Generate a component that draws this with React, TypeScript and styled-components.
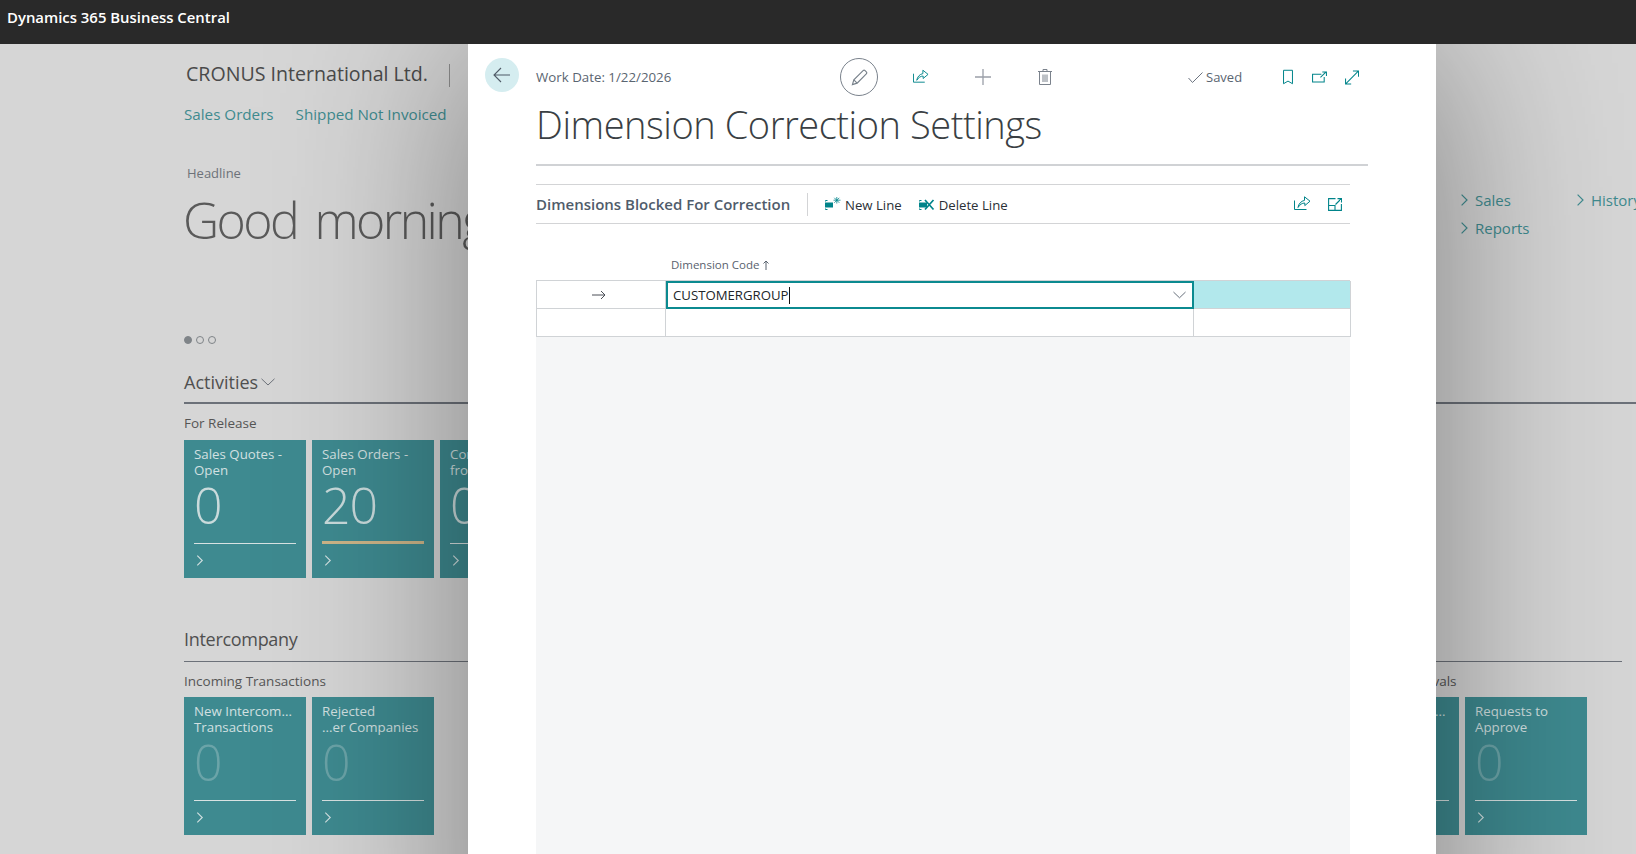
import React from 'react'
import styled, { createGlobalStyle } from 'styled-components'

const FONT = '"Open Sans", "Noto Sans", "Liberation Sans", sans-serif'
const TEAL = '#00848a'

const GlobalStyle = createGlobalStyle`
	html, body {
		margin: 0;
		height: 100%;
		overflow: hidden;
		background: #d6d6d6;
		font-family: ${FONT};
	}
`

interface TileData {
	lines: string[]
	value: string
	warn?: boolean
}

const releaseTiles: TileData[] = [
	{ lines: ['Sales Quotes -', 'Open'], value: '0' },
	{ lines: ['Sales Orders -', 'Open'], value: '20', warn: true },
	{ lines: ['Contracts -', 'from Sales'], value: '0' },
]

const incomingTiles: TileData[] = [
	{ lines: ['New Intercom...', 'Transactions'], value: '0' },
	{ lines: ['Rejected', '...er Companies'], value: '0' },
]

const approvalTiles: TileData[] = [
	{ lines: ['Requests Sent...', 'for Approval'], value: '0' },
	{ lines: ['Requests to', 'Approve'], value: '0' },
]

function Chevron({ size = 10 }: { size?: number }) {
	return (
		<svg width={size} height={size} viewBox="0 0 10 10" fill="none" stroke="currentColor" strokeWidth="1">
			<path d="M3 .5 7.5 5 3 9.5" />
		</svg>
	)
}

function ChevronDown({ width = 14 }: { width?: number }) {
	return (
		<svg width={width} height={8} viewBox="0 0 14 8" fill="none" stroke="currentColor" strokeWidth="1">
			<path d="M.5 .8 7 7l6.5-6.2" />
		</svg>
	)
}

function Tile({ tile, dim }: { tile: TileData; dim?: boolean }) {
	return (
		<TileBox>
			<TileTitle>
				{tile.lines.map((line) => (
					<div key={line}>{line}</div>
				))}
			</TileTitle>
			<TileValue $dim={dim}>{tile.value}</TileValue>
			<TileBar $warn={tile.warn} />
			<TileArrow>
				<Chevron size={11} />
			</TileArrow>
		</TileBox>
	)
}

function ShareIcon() {
	return (
		<svg width="17" height="16" viewBox="0 0 17 16" fill="none" stroke={TEAL} strokeWidth="1">
			<path d="M.5 4.500v9h12" />
			<path d="M4 11.500C4.500 8 7 5 10.500 4.400V.8L16 5.200 10.800 9.600V7C8 7 6 8.500 4 11.500z" />
		</svg>
	)
}

function SplitIcon() {
	return (
		<svg width="14" height="13" viewBox="0 0 14 13" fill="none" stroke={TEAL} strokeWidth="1.1">
			<path d="M7.500 .6H.6v11.800h12.800V6M.6 7.500H7v5M7.500 6.500 13 1M9.500 .6h4V4.500" />
		</svg>
	)
}

function NewLineIcon() {
	return (
		<svg width="16" height="15" viewBox="0 0 16 15" fill="none">
			<rect x="0" y="5.500" width="8" height="5" fill={TEAL} />
			<path d="M.5 4.500V3.500h2M.5 11.500v1h2" stroke={TEAL} strokeWidth="1" />
			<path d="M11.800 0v6.500M8.500 3.200h7M9.300 .8l5 5M14.300 .8l-5 5" stroke={TEAL} strokeWidth=".8" />
		</svg>
	)
}

function DeleteLineIcon() {
	return (
		<svg width="16" height="15" viewBox="0 0 16 15" fill="none">
			<rect x="0" y="5.500" width="8" height="5" fill={TEAL} />
			<path d="M.5 4.500V3.500h2M.5 11.500v1h2" stroke={TEAL} strokeWidth="1" />
			<path d="M6 3 14.500 12.500M14.500 3 6 12.500" stroke={TEAL} strokeWidth="1.700" />
		</svg>
	)
}

export default function App() {
	return (
		<Shell>
			<GlobalStyle />
			<TopBar>Dynamics 365 Business Central</TopBar>

			<Page>
				{/* Role center behind the dialog */}
				<CompanyRow>
					<CompanyName>CRONUS International Ltd.</CompanyName>
					<CompanySeparator />
				</CompanyRow>
				<NavRow>
					<NavLink>Sales Orders</NavLink>
					<NavLink>Shipped Not Invoiced</NavLink>
				</NavRow>

				<Hero>
					<HeroText>
						<HeadlineLabel>Headline</HeadlineLabel>
						<Greeting>Good morning, Annie!</Greeting>
					</HeroText>
					<ActionLinks>
						<ActionLink>
							<Chevron size={12} />
							Sales
						</ActionLink>
						<ActionLink>
							<Chevron size={12} />
							History
						</ActionLink>
						<ActionLink>
							<Chevron size={12} />
							Reports
						</ActionLink>
					</ActionLinks>
				</Hero>

				<Dots>
					<Dot $active />
					<Dot />
					<Dot />
				</Dots>

				<ActivitiesHeading>
					<SectionTitle>Activities</SectionTitle>
					<ChevronDown />
				</ActivitiesHeading>
				<GroupLabel>For Release</GroupLabel>
				<TileRow $top={7}>
					{releaseTiles.map((tile) => (
						<Tile key={tile.lines[0]} tile={tile} />
					))}
				</TileRow>

				<IntercompanyHeading>
					<SectionTitle>Intercompany</SectionTitle>
				</IntercompanyHeading>
				<SplitRow>
					<div>
						<GroupLabel>Incoming Transactions</GroupLabel>
						<TileRow $top={6}>
							{incomingTiles.map((tile) => (
								<Tile key={tile.lines[0]} tile={tile} dim />
							))}
						</TileRow>
					</div>
					<ApprovalGroup>
						<ApprovalLabel>Pending Approvals</ApprovalLabel>
						<TileRow $top={6}>
							{approvalTiles.map((tile) => (
								<Tile key={tile.lines[0]} tile={tile} dim />
							))}
						</TileRow>
					</ApprovalGroup>
				</SplitRow>
			</Page>

			<Dialog>
				<BackButton>
					<svg width="18" height="16" viewBox="0 0 18 16" fill="none" stroke="#4f5b67" strokeWidth="1.1">
						<path d="M17 8H1M8 1 1 8l7 7" />
					</svg>
				</BackButton>

				<DialogHeader>
					<WorkDate>Work Date: 1/22/2026</WorkDate>
					<CenterActions>
						<PencilCircle>
							<svg width="17" height="17" viewBox="0 0 18 18" fill="none" stroke="#77808a" strokeWidth="1.200">
								<path d="M1.500 16.500 3 11.500 12.800 1.700a1.500 1.500 0 0 1 2.100 0l1.300 1.300a1.500 1.500 0 0 1 0 2.100L6.500 15z" />
								<path d="M3 11.500 6.500 15" />
							</svg>
						</PencilCircle>
						<IconSlot $width={16} $left={35}>
							<ShareIcon />
						</IconSlot>
						<IconSlot $width={16} $left={46}>
							<svg width="16" height="16" viewBox="0 0 16 16" stroke="#9a9fa8" strokeWidth="1.300">
								<path d="M8 0v16M0 8h16" />
							</svg>
						</IconSlot>
						<IconSlot $width={14} $left={47}>
							<svg width="14" height="16" viewBox="0 0 14 16" fill="none" stroke="#7b828c" strokeWidth="1">
								<path d="M0 2.500h14M5 2.500V.5h4v2M1.500 2.500v13h11v-13M5 5.500v7.500M7 5.500v7.500M9 5.500v7.500" />
							</svg>
						</IconSlot>
					</CenterActions>
					<SavedStatus>
						<svg width="15" height="11" viewBox="0 0 15 11" fill="none" stroke="#6c7480" strokeWidth="1">
							<path d="M.5 6 4.500 10.500 14.500.5" />
						</svg>
						<SavedText>Saved</SavedText>
					</SavedStatus>
					<IconSlot $width={10} $left={40}>
						<svg width="11" height="16" viewBox="0 0 11 16" fill="none" stroke={TEAL} strokeWidth="1.100">
							<path d="M.6.6h9.800v14.800L5.500 12.500.6 15.400z" />
						</svg>
					</IconSlot>
					<IconSlot $width={15} $left={19}>
						<svg width="16" height="12" viewBox="0 0 16 12" fill="none" stroke={TEAL} strokeWidth="1.100">
							<path d="M10 3H.6v8.400H13V6M9 6.500 14.500 1M11 .6h4.400V5" />
						</svg>
					</IconSlot>
					<IconSlot $width={14} $left={18}>
						<svg width="15" height="15" viewBox="0 0 15 15" fill="none" stroke={TEAL} strokeWidth="1.100">
							<path d="M1 14 14 1M8.500.6h6v6M.6 8.500v6h6" />
						</svg>
					</IconSlot>
				</DialogHeader>

				<PageTitle>Dimension Correction Settings</PageTitle>
				<TitleRule />

				<ListPart>
					<ListToolbar>
						<ListTitle>Dimensions Blocked For Correction</ListTitle>
						<ToolbarSeparator />
						<ToolbarAction>
							<NewLineIcon />
							New Line
						</ToolbarAction>
						<ToolbarAction>
							<DeleteLineIcon />
							Delete Line
						</ToolbarAction>
						<ToolbarRight>
							<ShareIcon />
							<SplitIcon />
						</ToolbarRight>
					</ListToolbar>

					<ColumnHeader>
						Dimension Code
						<svg width="6" height="10" viewBox="0 0 6 10" fill="none" stroke="#59626e" strokeWidth="1">
							<path d="M3 10V1M.5 3.500 3 1l2.500 2.500" />
						</svg>
					</ColumnHeader>

					<Grid>
						<MarkerCell>
							<svg width="14" height="10" viewBox="0 0 14 10" fill="none" stroke="#4a4f57" strokeWidth="1">
								<path d="M0 5h13M9 1l4 4-4 4" />
							</svg>
						</MarkerCell>
						<EditCell>
							<EditValue>CUSTOMERGROUP</EditValue>
							<Caret />
							<EditChevron>
								<ChevronDown width={13} />
							</EditChevron>
						</EditCell>
						<Cell $selected />
						<Cell />
						<Cell />
						<Cell />
					</Grid>
					<GridFiller />
				</ListPart>
			</Dialog>
		</Shell>
	)
}

const Shell = styled.div`
	position: relative;
	height: 100vh;
	overflow: hidden;
`

const TopBar = styled.div`
	height: 44px;
	background: #292929;
	color: #fff;
	font-size: 14.900px;
	font-weight: 600;
	line-height: 35px;
	padding-left: 7px;
	position: relative;
	z-index: 3;
	box-sizing: border-box;
`

const Page = styled.div`
	height: 810px;
	overflow: hidden;
	box-sizing: border-box;
	padding: 18px 14px 0 184px;
	background: #d6d6d6;
`

const CompanyRow = styled.div`
	display: flex;
	align-items: center;
	height: 26px;
`

const CompanyName = styled.div`
	font-size: 19.600px;
	font-weight: 500;
	line-height: 24px;
	padding-bottom: 2px;
	color: #4a4a4a;
	margin-left: 2px;
	width: 263px;
	white-space: nowrap;
`

const CompanySeparator = styled.div`
	width: 1px;
	height: 23px;
	background: #8e8e8e;
`

const NavRow = styled.div`
	display: flex;
	gap: 22px;
	margin-top: 15px;
	height: 22px;
	align-items: center;
`

const NavLink = styled.div`
	font-size: 15.200px;
	color: #3f8b8f;
	white-space: nowrap;
`

const Hero = styled.div`
	display: flex;
	margin-top: 38px;
`

const HeroText = styled.div`
	width: 1274px;
	flex: none;
`

const HeadlineLabel = styled.div`
	font-size: 13px;
	line-height: 20px;
	color: #6d7279;
	margin-left: 3px;
`

const Greeting = styled.div`
	font-size: 50px;
	font-weight: 300;
	line-height: 64px;
	letter-spacing: -2.600px;
	word-spacing: 7px;
	margin: 5px 0 0 -1px;
	color: #5a5a5a;
	white-space: nowrap;
`

const ActionLinks = styled.div`
	flex: none;
	display: grid;
	grid-template-columns: 116px 116px;
	grid-auto-rows: 22px;
	row-gap: 6px;
	margin-top: 26px;
	align-content: start;
`

const ActionLink = styled.div`
	display: flex;
	align-items: center;
	gap: 5px;
	font-size: 15px;
	color: #3f8b8f;
	white-space: nowrap;
`

const Dots = styled.div`
	display: flex;
	gap: 4px;
	margin-top: 84px;
	height: 8px;
`

const Dot = styled.span<{ $active?: boolean }>`
	width: 8px;
	height: 8px;
	box-sizing: border-box;
	border-radius: 50%;
	border: 1px solid #7f8488;
	background: ${(p) => (p.$active ? '#7f8488' : 'transparent')};
`

const ActivitiesHeading = styled.div`
	display: flex;
	align-items: center;
	gap: 3px;
	margin: 25px -14px 0 0;
	height: 26px;
	padding-bottom: 7px;
	border-bottom: 2px solid #6c7179;
	color: #6c7179;
`

const IntercompanyHeading = styled.div`
	margin-top: 48px;
	height: 26px;
	padding-bottom: 9px;
	border-bottom: 1px solid #6c7179;
	letter-spacing: -0.300px;
`

const SectionTitle = styled.div`
	font-size: 18px;
	font-weight: 500;
	line-height: 26px;
	color: #505050;
`

const GroupLabel = styled.div`
	font-size: 13.500px;
	font-weight: 500;
	line-height: 20px;
	color: #555;
	margin-top: 9px;
	white-space: nowrap;
`

const ApprovalLabel = styled(GroupLabel)`
	padding-left: 2px;
`

const TileRow = styled.div<{ $top: number }>`
	display: flex;
	gap: 6px;
	margin-top: ${(p) => p.$top}px;
`

const SplitRow = styled.div`
	display: flex;
	justify-content: space-between;
`

const ApprovalGroup = styled.div`
	margin-right: 35px;
`

const TileBox = styled.div`
	width: 122px;
	height: 138px;
	flex: none;
	box-sizing: border-box;
	padding: 6px 10px 0;
	background: #3e8a90;
	color: #d2e0e1;
`

const TileTitle = styled.div`
	font-size: 13.300px;
	line-height: 16px;
	height: 32px;
	white-space: nowrap;
`

const TileValue = styled.div<{ $dim?: boolean }>`
	font-size: 50px;
	font-weight: 300;
	line-height: 50px;
	height: 50px;
	margin-top: 2px;
	letter-spacing: -1px;
	opacity: ${(p) => (p.$dim ? 0.3 : 0.95)};
`

const TileBar = styled.div<{ $warn?: boolean }>`
	height: ${(p) => (p.$warn ? '3px' : '1px')};
	margin-top: ${(p) => (p.$warn ? '11px' : '13px')};
	background: ${(p) => (p.$warn ? '#cdb588' : '#d8e2e2')};
`

const TileArrow = styled.div`
	margin-top: 11px;
	line-height: 0;
`

/* modal sheet over the role center */
const Dialog = styled.div`
	position: absolute;
	top: 44px;
	left: 468px;
	width: 968px;
	height: 1000px;
	z-index: 2;
	box-sizing: border-box;
	padding: 16px 68px 0;
	background: #fff;
	box-shadow: 0 0 180px rgba(0, 0, 0, 0.42);
	color: #505c6b;
`

const BackButton = styled.div`
	position: absolute;
	top: 14px;
	left: 17px;
	width: 34px;
	height: 34px;
	border-radius: 50%;
	background: #d5edf0;
	display: flex;
	align-items: center;
	justify-content: center;
`

const DialogHeader = styled.div`
	display: flex;
	align-items: center;
	height: 34px;
`

const WorkDate = styled.div`
	font-size: 13.300px;
	color: #5a6571;
	width: 304px;
	flex: none;
	white-space: nowrap;
`

const CenterActions = styled.div`
	display: flex;
	align-items: center;
	width: 348px;
	flex: none;
`

const PencilCircle = styled.div`
	width: 38px;
	height: 38px;
	box-sizing: border-box;
	border: 1px solid #7a828c;
	border-radius: 50%;
	display: flex;
	align-items: center;
	justify-content: center;
	flex: none;
`

const IconSlot = styled.div<{ $width: number; $left: number }>`
	width: ${(p) => p.$width}px;
	margin-left: ${(p) => p.$left}px;
	flex: none;
	display: flex;
	align-items: center;
	line-height: 0;
`

const SavedStatus = styled.div`
	display: flex;
	align-items: center;
	gap: 3px;
	width: 55px;
	flex: none;
`

const SavedText = styled.span`
	font-size: 13px;
	color: #5a6571;
`

const PageTitle = styled.h1`
	margin: 5px 0 0;
	font-size: 38px;
	font-weight: 300;
	line-height: 50px;
	letter-spacing: -0.450px;
	color: #3a3f44;
	white-space: nowrap;
`

const TitleRule = styled.div`
	height: 2px;
	margin-top: 15px;
	background: #d0d2d5;
`

const ListPart = styled.div`
	margin: 18px 18px 0 0;
`

const ListToolbar = styled.div`
	height: 38px;
	display: flex;
	align-items: center;
	border-top: 1px solid #d3d4d6;
	border-bottom: 1px solid #d3d4d6;
	box-sizing: content-box;
`

const ListTitle = styled.div`
	font-size: 15px;
	font-weight: 600;
	color: #505c6b;
	width: 271px;
	flex: none;
	white-space: nowrap;
`

const ToolbarSeparator = styled.div`
	width: 1px;
	height: 23px;
	background: #d3d4d6;
	margin-right: 17px;
`

const ToolbarAction = styled.div`
	display: flex;
	align-items: center;
	gap: 4px;
	padding-top: 1px;
	font-size: 13.200px;
	color: #2b3036;
	margin-right: 17px;
	white-space: nowrap;
`

const ToolbarRight = styled.div`
	margin-left: auto;
	margin-right: 8px;
	display: flex;
	align-items: center;
	gap: 17px;
`

const ColumnHeader = styled.div`
	height: 56px;
	box-sizing: border-box;
	padding: 33px 0 0 135px;
	font-size: 11.500px;
	line-height: 16px;
	color: #59626e;
	display: flex;
	align-items: flex-start;
	gap: 4px;

	svg {
		margin-top: 3px;
	}
`

const Grid = styled.div`
	display: grid;
	grid-template-columns: 129px 528px 157px;
	grid-auto-rows: 28px;
	border-top: 1px solid #d0d3d6;
	border-left: 1px solid #d0d3d6;
	box-sizing: border-box;
`

const Cell = styled.div<{ $selected?: boolean }>`
	box-sizing: border-box;
	border-right: 1px solid #d0d3d6;
	border-bottom: 1px solid #d0d3d6;
	background: ${(p) => (p.$selected ? '#b2e8ec' : '#fff')};
`

const MarkerCell = styled(Cell)`
	display: flex;
	align-items: center;
	justify-content: center;
	padding-right: 5px;
`

const EditCell = styled.div`
	box-sizing: border-box;
	border: 2px solid #0b8a90;
	display: flex;
	align-items: center;
	padding-left: 5px;
	background: #fff;
`

const EditValue = styled.span`
	font-size: 13.200px;
	color: #212529;
`

const Caret = styled.span`
	width: 1px;
	height: 17px;
	background: #111;
`

const EditChevron = styled.span`
	margin-left: auto;
	margin-right: 6px;
	color: #5b6570;
	line-height: 0;
`

const GridFiller = styled.div`
	height: 540px;
	background: #f5f6f7;
`
